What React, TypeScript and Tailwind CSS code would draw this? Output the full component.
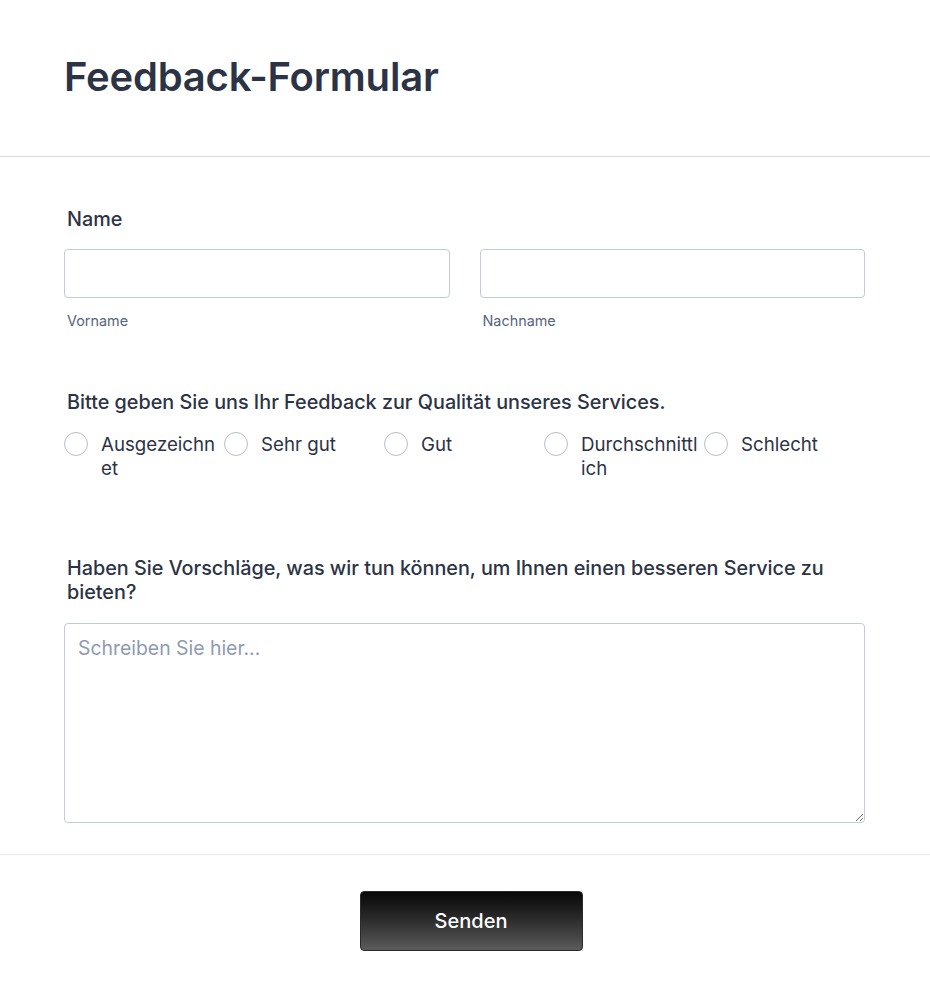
import { useState } from "react";

const OPTIONS = ["Ausgezeichnet", "Sehr gut", "Gut", "Durchschnittlich", "Schlecht"];

function Radio({ label, checked, onSelect }: { label: string; checked: boolean; onSelect: () => void }) {
  return (
    <label className="flex w-[160px] items-start cursor-pointer" onClick={onSelect}>
      <span className="flex h-6 w-6 shrink-0 items-center justify-center rounded-full border border-[#b8bdc9] bg-white">
        {checked && <span className="h-3 w-3 rounded-full bg-[#2c3345]" />}
      </span>
      <span className="ml-[13px] w-[118px] break-all pt-px text-[18.7px] leading-6 text-[#2c3345]">{label}</span>
    </label>
  );
}

export default function App() {
  const [rating, setRating] = useState("");

  return (
    <div className="min-h-[1000px] bg-white" style={{ fontFamily: "Inter, 'Noto Sans', sans-serif" }}>
      <div className="border-b border-[#d8dae6] px-16 pt-[53px] pb-[55px]">
        <h1 className="text-[40px] leading-[48px] font-semibold tracking-[-0.2px] text-[#2c3345]">Feedback-Formular</h1>
      </div>

      <div className="pl-16 pr-[65px] pt-[50px]">
        <p className="pl-[3px] text-[19.8px] leading-6 font-medium text-[#2c3345]">Name</p>
        <div className="mt-[18px] flex gap-[30px]">
          <div className="flex-1">
            <input className="h-[49px] w-full rounded border border-[#c3cad8] px-3 text-[16px] outline-none" />
            <p className="mt-[14px] pl-[3px] text-[14.4px] leading-[18px] text-[#57647e]">Vorname</p>
          </div>
          <div className="flex-1">
            <input className="h-[49px] w-full rounded border border-[#c3cad8] px-3 text-[16px] outline-none" />
            <p className="mt-[14px] pl-[3px] text-[14.4px] leading-[18px] text-[#57647e]">Nachname</p>
          </div>
        </div>

        <p className="mt-[60px] pl-[3px] text-[19.8px] leading-6 font-medium text-[#2c3345]">
          Bitte geben Sie uns Ihr Feedback zur Qualität unseres Services.
        </p>
        <div className="mt-[18px] flex">
          {OPTIONS.map(o => (
            <Radio key={o} label={o} checked={rating === o} onSelect={() => setRating(o)} />
          ))}
        </div>

        <p className="mt-[75px] pl-[3px] pr-8 text-[19.8px] leading-6 font-medium text-[#2c3345]">
          Haben Sie Vorschläge, was wir tun können, um Ihnen einen besseren Service zu bieten?
        </p>
        <textarea
          className="mt-[19px] block h-[200px] w-full rounded border border-[#c3cad8] px-[13px] py-[12px] text-[19.4px] leading-6 text-[#2c3345] outline-none placeholder:text-[#8f9bb0]"
          placeholder="Schreiben Sie hier..."
        />
      </div>

      <div className="mt-[31px] flex justify-center border-t border-[#e6e7ee] pt-[36px] pl-3">
        <button className="h-[60px] w-[223px] rounded border border-[#2a2a2a] bg-gradient-to-b from-[#080808] to-[#5b5b5b] text-[20px] font-medium text-white">
          Senden
        </button>
      </div>
    </div>
  );
}
